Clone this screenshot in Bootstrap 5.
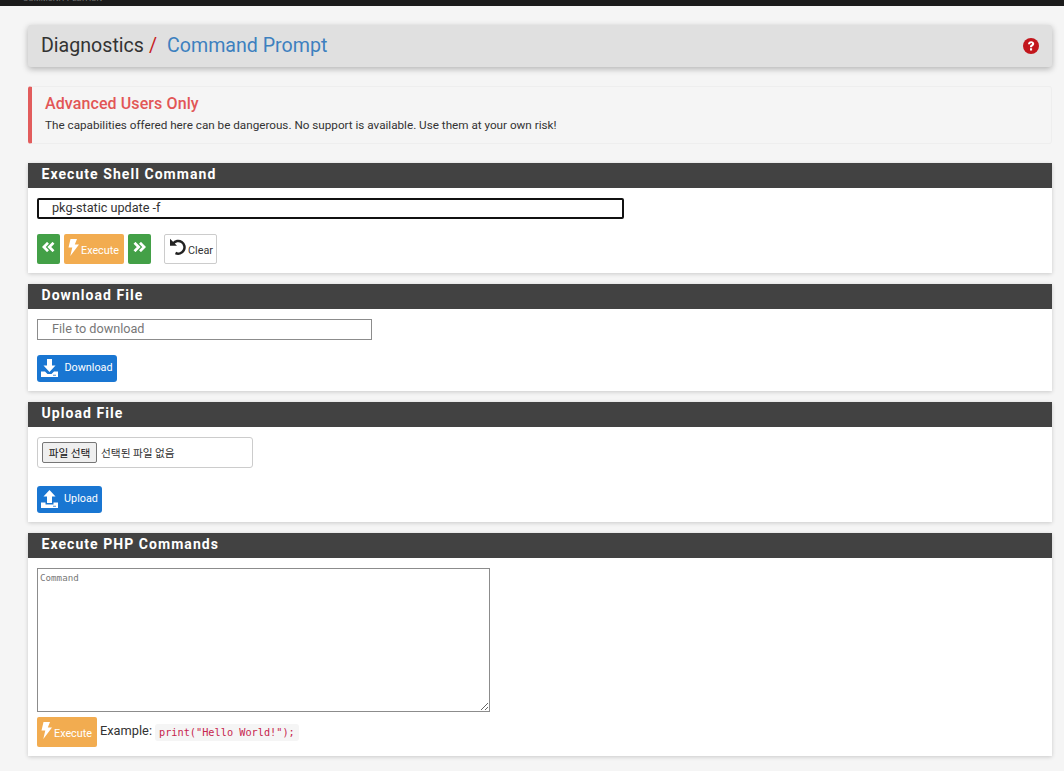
<!DOCTYPE html>
<html lang="en">
<head>
<meta charset="utf-8">
<title>Diagnostics: Command Prompt</title>
<link href="https://cdn.jsdelivr.net/npm/bootstrap@5.3.0/dist/css/bootstrap.min.css" rel="stylesheet">
<style>
html,body{height:771px;overflow:hidden}
body{background:#f5f5f5;font-family:Roboto,"Liberation Sans",sans-serif;color:#333;font-size:14px;line-height:20px}
.topstrip{height:6px;background:#1b1b1b;overflow:hidden;color:#777;font-size:8px;line-height:1}
.topstrip span{display:block;margin:-5px 0 0 23px}
.pagewrap{padding:19px 12px 0 28px}
.crumbbar{height:42px;background:#e0e0e0;border-radius:3px;box-shadow:0 2px 6px rgba(0,0,0,.28);padding:0 13px;margin-bottom:19px}
.crumbtitle{font-size:19.6px;line-height:40px;color:#333}
.crumbsep{color:#c71c22;margin:0 10px 0 5px}
.crumbtitle a{color:#3d80bf;text-decoration:none}
.callout{height:58px;border:1px solid #eee;border-left:4px solid #e25c5c;border-radius:3px;padding:7px 13px;margin-bottom:19px}
.callout h4{font-size:16px;line-height:20px;font-weight:500;color:#e25656;margin:0 0 2px;letter-spacing:.1px}
.callout p{font-size:11.7px;line-height:18px;margin:0;color:#333}
.sect{background:#fff;border:0;border-radius:0;box-shadow:0 1px 4px rgba(0,0,0,.18);margin-bottom:11px}
.sect .secthead{background:#424242;color:#fff;height:25px;line-height:23px;font-size:14px;font-weight:700;letter-spacing:1.05px;padding:0 13.5px;border-radius:0;border:0}
.sectbody{padding:10px 9px 9px}
.txtfield{display:block;height:21px;border:1px solid #8c8c8c;border-radius:0;padding:0 14px 2px;font:12.65px/17px Roboto,sans-serif;color:#333;background:#fff;outline:0}
.txtfield::placeholder{color:#777}
.f-shell{width:587px;border:2px solid #111;border-radius:2px;margin-bottom:15px;padding:0 13px 2px}
.f-dl{width:335px;margin-bottom:15px}
.filebox{width:216px;height:31px;border:1px solid #ccc;border-radius:3px;padding:4px;display:flex;align-items:center;font:10.7px/16px "Noto Sans CJK KR",sans-serif;color:#333;margin-bottom:18px}
.filebtn{width:55px;height:21px;border:1px solid #767676;background:#efefef;border-radius:2px;padding:0;font:10.7px/16px "Noto Sans CJK KR",sans-serif;color:#111;margin-right:4px}
.actbtn{display:inline-flex;align-items:center;justify-content:center;border:0;border-radius:2px;color:#fff;font-size:10.8px;line-height:14px;padding:0;height:30px}
.actbtn:hover{color:#fff}
.b-green{background:#43a047;width:23px}
.b-green svg{margin-bottom:4px}
.b-orange{background:#f2ac50;width:60px;gap:2px}
.b-orange svg{margin:-4px 0 0 -1px}
.b-blue{background:#1976d2;height:27px;border-radius:3px;gap:6px}
.b-blue svg{margin-top:-2px}
.b-blue span{margin-top:-2px}
.b-dl{width:80px}
.b-ul{width:65px}
.b-white{background:#fff;color:#333;width:53px;border:1px solid #ccc;gap:2px}
.b-white svg{margin:-5px 0 0 2px}
.b-white:hover{color:#333}
.btnlabel{margin-top:3px}
.btnrow{display:flex;gap:4px;align-items:center;height:30px}
.btnrow .b-white{margin-left:9px}
.phparea{display:block;width:453px;height:144px;border:1px solid #8c8c8c;border-radius:0;padding:2px 2px;font:9.2px/13px "DejaVu Sans Mono",monospace;margin-bottom:5px;outline:0;resize:both}
.phparea::placeholder{color:#777}
.exline{display:flex;align-items:center;height:30px;font-size:12.8px}
.exline .actbtn{margin-right:3px}
.exline code{background:#f5f5f5;color:#c7254e;font:10.25px/15px "DejaVu Sans Mono",monospace;padding:1px 4px;border-radius:3px;margin:1px 0 0 3px}
.exline > span{margin-top:-3px;color:#333}
svg{display:block;flex:none}
</style>
</head>
<body>
<div class="topstrip"><span>COMMUNITY EDITION</span></div>
<div class="pagewrap">
  <div class="crumbbar d-flex align-items-center justify-content-between">
    <div class="crumbtitle">Diagnostics<span class="crumbsep">/</span><a href="#">Command Prompt</a></div>
    <svg width="16" height="16" viewBox="0 0 16 16" aria-label="Help"><circle cx="8" cy="8" r="8" fill="#c2161c"/><path d="M5 6.2C5 4.4 6.4 3.2 8.2 3.2c1.7 0 3 1.1 3 2.6 0 1.300-.8 1.900-1.600 2.400-.5.3-.6.5-.6 1.100H7V8.700c0-1 .5-1.500 1.200-1.900.5-.3.9-.5.9-1 0-.4-.4-.7-.9-.7-.6 0-1 .4-1.100 1.100zM7 10.300h2.100v2.100H7z" fill="#fff"/></svg>
  </div>

  <div class="callout">
    <h4>Advanced Users Only</h4>
    <p>The capabilities offered here can be dangerous. No support is available. Use them at your own risk!</p>
  </div>

  <div class="card sect">
    <div class="card-header secthead">Execute Shell Command</div>
    <div class="sectbody">
      <input class="txtfield f-shell" type="text" value="pkg-static update -f">
      <div class="btnrow">
        <button class="btn actbtn b-green" type="button" aria-label="Previous"><svg width="13" height="10" viewBox="0 0 13 10"><path d="M6 .8 1.800 5 6 9.200M11.500 .8 7.300 5l4.200 4.200" fill="none" stroke="#fff" stroke-width="2.700"/></svg></button>
        <button class="btn actbtn b-orange" type="button"><svg width="11" height="17" viewBox="0 0 11 17"><path d="M2.500 0H9L6.800 5.500H11L2.300 17 4.300 8.500H0.500z" fill="#fff"/></svg><span class="btnlabel">Execute</span></button>
        <button class="btn actbtn b-green" type="button" aria-label="Next"><svg width="13" height="10" viewBox="0 0 13 10"><path d="M1.500 .8 5.700 5 1.500 9.200M7 .8 11.200 5 7 9.200" fill="none" stroke="#fff" stroke-width="2.700"/></svg></button>
        <button class="btn actbtn b-white" type="button"><svg width="16" height="17" viewBox="0 0 16 17"><path d="M3.200 5.500A6.300 6.300 0 1 1 5.500 15" fill="none" stroke="#222" stroke-width="2.500"/><path d="M0 .8v7h7z" fill="#222"/></svg><span class="btnlabel">Clear</span></button>
      </div>
    </div>
  </div>

  <div class="card sect">
    <div class="card-header secthead">Download File</div>
    <div class="sectbody">
      <input class="txtfield f-dl" type="text" placeholder="File to download">
      <button class="btn actbtn b-blue b-dl" type="button"><svg width="17" height="18" viewBox="0 0 17 18"><path d="M6 0h5v6.500h3.500L8.500 13 2.500 6.500H6z" fill="#fff"/><path d="M0 12.500h4l2.500 2.500h4l2.500-2.500h4V18H0z" fill="#fff"/><path d="M12 15.800h3v.8h-3z" fill="#1976d2"/></svg><span>Download</span></button>
    </div>
  </div>

  <div class="card sect">
    <div class="card-header secthead">Upload File</div>
    <div class="sectbody">
      <div class="filebox"><button class="filebtn" type="button">파일 선택</button><span>선택된 파일 없음</span></div>
      <button class="btn actbtn b-blue b-ul" type="button"><svg width="17" height="18" viewBox="0 0 17 18"><path d="M8.500 0l6 6.500H11V13H6V6.500H2.500z" fill="#fff"/><path d="M0 12.500h4.500V14.500h8V12.500H17V18H0z" fill="#fff"/><path d="M12 15.800h3v.8h-3z" fill="#1976d2"/></svg><span>Upload</span></button>
    </div>
  </div>

  <div class="card sect">
    <div class="card-header secthead">Execute PHP Commands</div>
    <div class="sectbody">
      <textarea class="phparea" placeholder="Command"></textarea>
      <div class="exline">
        <button class="btn actbtn b-orange" type="button"><svg width="11" height="17" viewBox="0 0 11 17"><path d="M2.500 0H9L6.800 5.500H11L2.300 17 4.300 8.500H0.500z" fill="#fff"/></svg><span class="btnlabel">Execute</span></button>
        <span>Example:</span>
        <code>print("Hello World!");</code>
      </div>
    </div>
  </div>
</div>
<script src="https://cdn.jsdelivr.net/npm/bootstrap@5.3.0/dist/js/bootstrap.bundle.min.js"></script>
</body>
</html>
